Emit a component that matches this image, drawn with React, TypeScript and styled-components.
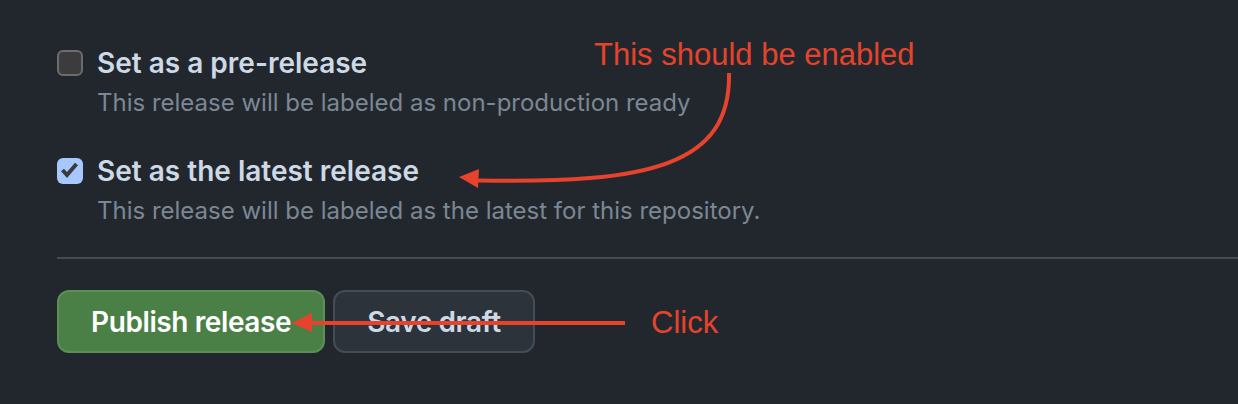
import React from "react";
import styled, { createGlobalStyle } from "styled-components";

const Global = createGlobalStyle`
  html, body { margin: 0; padding: 0; background: #22272e; }
  body { font-family: Inter, "Noto Sans", sans-serif; }
`;

const Page = styled.div`
  position: relative;
  width: 1238px;
  height: 404px;
  box-sizing: border-box;
  padding: 43px 0 0 57px;
  background: #22272e;
  overflow: hidden;
`;

const OptionList = styled.div`
  display: flex;
  flex-direction: column;
  gap: 30px;
`;

const Option = styled.label`
  display: flex;
  align-items: flex-start;
  gap: 14px;
`;

const Box = styled.span<{ $checked?: boolean }>`
  flex: none;
  width: 26px;
  height: 26px;
  margin-top: 7px;
  box-sizing: border-box;
  border-radius: 6px;
  display: flex;
  align-items: center;
  justify-content: center;
  background: ${(p) => (p.$checked ? "#a6c8ff" : "#3c3c3d")};
  border: ${(p) => (p.$checked ? "none" : "2px solid #6c6c6e")};
`;

const OptionText = styled.div`
  display: flex;
  flex-direction: column;
`;

const Label = styled.span`
  font-size: 28px;
  line-height: 40px;
  font-weight: 600;
  color: #cdd9e5;
`;

const Note = styled.span`
  margin-top: 2px;
  font-size: 24px;
  line-height: 36px;
  color: #7b8793;
`;

const Divider = styled.hr`
  margin: 28px 0 31px 0;
  border: none;
  border-top: 2px solid #444c56;
  height: 0;
`;

const Actions = styled.div`
  display: flex;
  gap: 8px;
`;

const Button = styled.button<{ $primary?: boolean }>`
  height: 63px;
  box-sizing: border-box;
  padding: 0 32px;
  border-radius: 12px;
  font-family: Inter, "Noto Sans", sans-serif;
  font-size: 28px;
  font-weight: 600;
  letter-spacing: -0.4px;
  color: ${(p) => (p.$primary ? "#ffffff" : "#cdd9e5")};
  background: ${(p) => (p.$primary ? "#4a7f46" : "#2d333b")};
  border: 2px solid ${(p) => (p.$primary ? "#5b8f56" : "#444c56")};
`;

const Overlay = styled.svg`
  position: absolute;
  left: 0;
  top: 0;
  pointer-events: none;
`;

const Callout = styled.span<{ $x: number; $y: number }>`
  position: absolute;
  left: ${(p) => p.$x}px;
  top: ${(p) => p.$y}px;
  font-family: "Liberation Sans", Arial, sans-serif;
  font-size: 31px;
  line-height: 36px;
  color: #e5432c;
  white-space: nowrap;
`;

function Check() {
  return (
    <svg width="26" height="26" viewBox="0 0 26 26">
      <polyline
        points="5.5,12 10,17 19.5,6"
        fill="none"
        stroke="#3b3b3c"
        strokeWidth="4"
        strokeLinecap="butt"
        strokeLinejoin="miter"
      />
    </svg>
  );
}

export default function App() {
  return (
    <>
      <Global />
      <Page>
        <OptionList>
          <Option>
            <Box />
            <OptionText>
              <Label>Set as a pre-release</Label>
              <Note>This release will be labeled as non-production ready</Note>
            </OptionText>
          </Option>
          <Option>
            <Box $checked>
              <Check />
            </Box>
            <OptionText>
              <Label>Set as the latest release</Label>
              <Note>This release will be labeled as the latest for this repository.</Note>
            </OptionText>
          </Option>
        </OptionList>
        <Divider />
        <Actions>
          <Button $primary>Publish release</Button>
          <Button>Save draft</Button>
        </Actions>

        <Callout $x={594} $y={37}>This should be enabled</Callout>
        <Callout $x={651} $y={305}>Click</Callout>
        <Overlay width="1238" height="404" viewBox="0 0 1238 404">
          <path
            d="M 729 73 C 731 165, 650 184, 478 180.5"
            fill="none"
            stroke="#e5432c"
            strokeWidth="4"
          />
          <polygon points="459,177 479,169 478,188" fill="#e5432c" />
          <line x1="310" y1="323" x2="625" y2="323" stroke="#e5432c" strokeWidth="4" />
          <polygon points="292,323 312,313 312,332" fill="#e5432c" />
        </Overlay>
      </Page>
    </>
  );
}
